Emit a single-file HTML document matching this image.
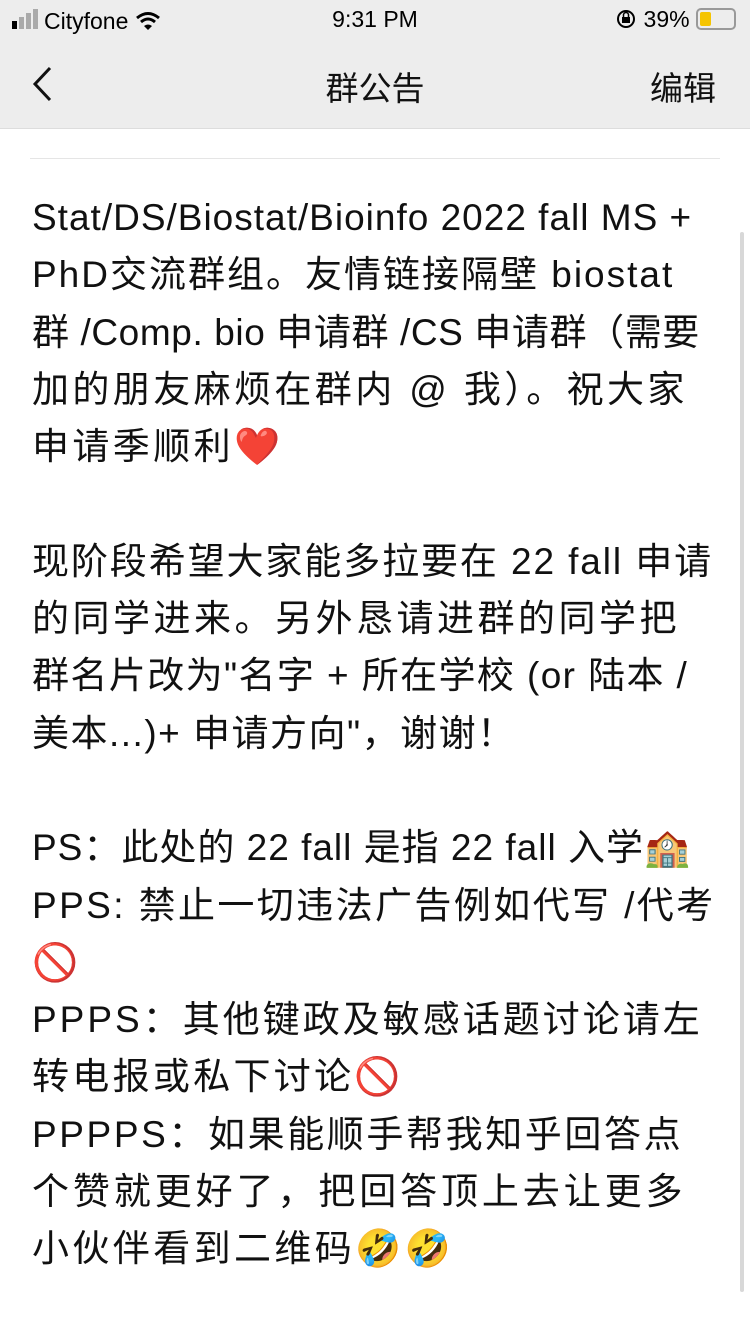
<!DOCTYPE html>
<html><head><meta charset="utf-8"><style>
body{margin:0;width:750px;height:1334px;background:#fff;position:relative;overflow:hidden;font-family:"Liberation Sans","Noto Sans CJK SC",sans-serif;}
.hdr{position:absolute;left:0;top:0;width:750px;height:128px;background:#ededed;border-bottom:1px solid #ddd}
.sb{position:absolute;top:6px;font-size:23px;color:#000}
.title{position:absolute;top:62px;width:750px;text-align:center;font-size:33px;color:#111}
.edit{position:absolute;top:62px;right:34px;font-size:33px;color:#111}
.div{position:absolute;left:30px;width:690px;top:158px;height:1px;background:#e5e5e5}
.txt{position:absolute;left:32px;top:189px;font-size:37px;line-height:57.3px;color:#111;white-space:nowrap}
.txt div{height:57.3px}
.scroll{position:absolute;right:6px;top:232px;width:4px;height:1060px;background:#d8d8d8;border-radius:2px}
</style></head><body>
<div class="hdr">
<div class="sb" style="left:12px;top:8px"><span style="display:inline-block;width:5px;height:8px;background:#000;margin-right:2px"></span><span style="display:inline-block;width:5px;height:12px;background:#aaa;margin-right:2px"></span><span style="display:inline-block;width:5px;height:16px;background:#aaa;margin-right:2px"></span><span style="display:inline-block;width:5px;height:20px;background:#aaa;margin-right:6px"></span>Cityfone <svg width="26" height="20" style="vertical-align:-2px"><path d="M2 7 Q13 -2 24 7" stroke="#000" stroke-width="3" fill="none"/><path d="M6 11 Q13 5 20 11" stroke="#000" stroke-width="3" fill="none"/><path d="M9 15 L13 19 L17 15 Q13 12 9 15Z" fill="#000"/></svg></div>
<div class="sb" style="left:0;width:750px;text-align:center;font-size:23px">9:31 PM</div>
<div class="sb" style="right:14px"><svg width="22" height="22" style="vertical-align:-3px"><circle cx="11" cy="11" r="8" stroke="#000" stroke-width="2" fill="none"/><rect x="7" y="9" width="8" height="6" fill="#000"/><path d="M8.5 9 V7 a2.5 2.5 0 0 1 5 0 V9" stroke="#000" stroke-width="1.5" fill="none"/></svg> 39% <span style="display:inline-block;width:36px;height:18px;border:2px solid #999;border-radius:5px;vertical-align:-3px;position:relative"><span style="position:absolute;left:2px;top:2px;width:11px;height:14px;background:#f5c400;border-radius:2px"></span></span></div>
<svg style="position:absolute;left:30px;top:66px" width="24" height="36"><path d="M20 2 L5 18 L20 34" stroke="#111" stroke-width="3" fill="none"/></svg>
<div class="title">群公告</div>
<div class="edit">编辑</div>
</div>
<div class="div"></div>
<div class="txt">
<div style="letter-spacing:1px">Stat/DS/Biostat/Bioinfo 2022 fall MS +</div>
<div style="letter-spacing:2px">PhD交流群组。友情链接隔壁 biostat</div>
<div style="letter-spacing:0.6px">群 /Comp. bio 申请群 /CS 申请群（需要</div>
<div style="letter-spacing:3.4px">加的朋友麻烦在群内 @ 我）。祝大家</div>
<div style="letter-spacing:3.4px">申请季顺利<span style="color:#e02020">❤️</span></div>
<div></div>
<div style="letter-spacing:1.9px">现阶段希望大家能多拉要在 22 fall 申请</div>
<div style="letter-spacing:3.5px">的同学进来。另外恳请进群的同学把</div>
<div style="letter-spacing:1.4px">群名片改为"名字 + 所在学校 (or 陆本 /</div>
<div style="letter-spacing:1.5px">美本...)+ 申请方向"，谢谢！</div>
<div></div>
<div style="letter-spacing:1px">PS：此处的 22 fall 是指 22 fall 入学🏫</div>
<div style="letter-spacing:2.4px">PPS: 禁止一切违法广告例如代写 /代考</div>
<div>🚫</div>
<div style="letter-spacing:3px">PPPS：其他键政及敏感话题讨论请左</div>
<div style="letter-spacing:3.3px">转电报或私下讨论🚫</div>
<div style="letter-spacing:2.6px">PPPPS：如果能顺手帮我知乎回答点</div>
<div style="letter-spacing:3.9px">个赞就更好了，把回答顶上去让更多</div>
<div style="letter-spacing:3.4px">小伙伴看到二维码🤣🤣</div>
</div>
<div class="scroll"></div>
</body></html>
